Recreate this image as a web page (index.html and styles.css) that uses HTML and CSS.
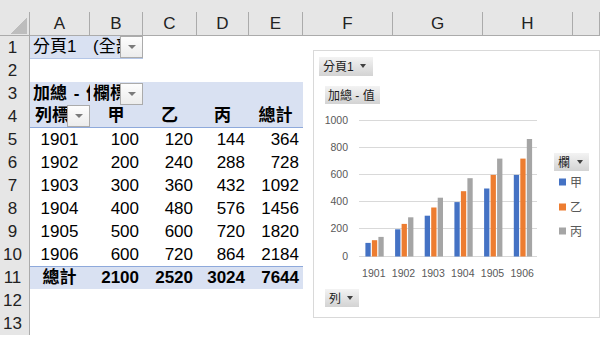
FILE: index.html
```html
<!DOCTYPE html>
<html lang="zh-Hant">
<head>
    <meta charset="UTF-8">
    <title>樞紐分析表</title>
    <link rel="stylesheet" href="styles.css">
</head>
<body>
    <div class="sheet">
        <div class="row colheads">
            <div class="corner"><div class="tri"></div></div>
            <div class="ch">A</div><div class="ch">B</div><div class="ch">C</div><div class="ch">D</div>
            <div class="ch">E</div><div class="ch">F</div><div class="ch">G</div><div class="ch">H</div>
            <div class="ch"></div>
        </div>

        <div class="row">
            <div class="rn">1</div>
            <div class="c pv page">分頁1</div>
            <div class="c pv page has-btn"><span class="lbl">(全部)</span><div class="dd"></div></div>
        </div>
        <div class="row">
            <div class="rn">2</div>
        </div>
        <div class="row">
            <div class="rn">3</div>
            <div class="c pv b wide">加總 - 值</div>
            <div class="c pv b has-btn"><span class="lbl">欄標籤</span><div class="dd"></div></div>
            <div class="c pv"></div><div class="c pv"></div><div class="c pv"></div>
        </div>
        <div class="row">
            <div class="rn">4</div>
            <div class="c pv b head has-btn"><span class="lbl">列標籤</span><div class="dd"></div></div>
            <div class="c pv b head ctr">甲</div>
            <div class="c pv b head ctr">乙</div>
            <div class="c pv b head ctr">丙</div>
            <div class="c pv b head ctr">總計</div>
        </div>
        <div class="row">
            <div class="rn">5</div>
            <div class="c ctr">1901</div><div class="c num">100</div><div class="c num">120</div><div class="c num">144</div><div class="c num">364</div>
        </div>
        <div class="row">
            <div class="rn">6</div>
            <div class="c ctr">1902</div><div class="c num">200</div><div class="c num">240</div><div class="c num">288</div><div class="c num">728</div>
        </div>
        <div class="row">
            <div class="rn">7</div>
            <div class="c ctr">1903</div><div class="c num">300</div><div class="c num">360</div><div class="c num">432</div><div class="c num">1092</div>
        </div>
        <div class="row">
            <div class="rn">8</div>
            <div class="c ctr">1904</div><div class="c num">400</div><div class="c num">480</div><div class="c num">576</div><div class="c num">1456</div>
        </div>
        <div class="row">
            <div class="rn">9</div>
            <div class="c ctr">1905</div><div class="c num">500</div><div class="c num">600</div><div class="c num">720</div><div class="c num">1820</div>
        </div>
        <div class="row">
            <div class="rn">10</div>
            <div class="c ctr">1906</div><div class="c num">600</div><div class="c num">720</div><div class="c num">864</div><div class="c num">2184</div>
        </div>
        <div class="row">
            <div class="rn">11</div>
            <div class="c pv b total ctr">總計</div>
            <div class="c pv b total num">2100</div>
            <div class="c pv b total num">2520</div>
            <div class="c pv b total num">3024</div>
            <div class="c pv b total num">7644</div>
        </div>
        <div class="row">
            <div class="rn">12</div>
        </div>
        <div class="row">
            <div class="rn">13</div>
        </div>

        <div class="chart">
            <svg width="287" height="268" viewBox="0 0 287 268">
                <defs>
                    <linearGradient id="btn" x1="0" y1="0" x2="0" y2="1">
                        <stop offset="0" stop-color="#F3F3F3"/>
                        <stop offset="1" stop-color="#D3D3D3"/>
                    </linearGradient>
                </defs>
                <rect x="0.5" y="0.5" width="286" height="267" fill="#fff" stroke="#D9D9D9"/>

                <!-- 欄位按鈕 -->
                <rect x="6" y="7" width="54" height="19" fill="url(#btn)"/>
                <text class="btn-text" x="10" y="21">分頁1</text>
                <polygon points="47,14 53,14 50,18" fill="#404040"/>

                <rect x="12" y="36" width="55" height="18" fill="url(#btn)"/>
                <text class="btn-text" x="15" y="50">加總 - 值</text>

                <rect x="241" y="103" width="35" height="18" fill="url(#btn)"/>
                <text class="btn-text" x="245" y="117">欄</text>
                <polygon points="264,110 270,110 267,114" fill="#404040"/>

                <rect x="12" y="239" width="34" height="18" fill="url(#btn)"/>
                <text class="btn-text" x="16" y="253">列</text>
                <polygon points="34,246 40,246 37,250" fill="#404040"/>

                <!-- 格線與座標 -->
                <g class="grid">
                    <line x1="46" y1="70.5" x2="224" y2="70.5"/>
                    <line x1="46" y1="97.5" x2="224" y2="97.5"/>
                    <line x1="46" y1="124.5" x2="224" y2="124.5"/>
                    <line x1="46" y1="151.5" x2="224" y2="151.5"/>
                    <line x1="46" y1="178.5" x2="224" y2="178.5"/>
                    <line x1="46" y1="206.5" x2="224" y2="206.5"/>
                </g>
                <g class="axis" text-anchor="end">
                    <text x="35" y="74">1000</text>
                    <text x="35" y="101">800</text>
                    <text x="35" y="128">600</text>
                    <text x="35" y="155">400</text>
                    <text x="35" y="182">200</text>
                    <text x="35" y="210">0</text>
                </g>
                <g id="bars"></g>
                <g id="cats" class="axis" text-anchor="middle"></g>

                <!-- 圖例 -->
                <rect x="246" y="128.5" width="7" height="7" fill="#4472C4"/>
                <text class="legend" x="257" y="137">甲</text>
                <rect x="246" y="153.5" width="7" height="7" fill="#ED7D31"/>
                <text class="legend" x="257" y="162">乙</text>
                <rect x="246" y="177.5" width="7" height="7" fill="#A5A5A5"/>
                <text class="legend" x="257" y="186">丙</text>
            </svg>
        </div>
    </div>

    <script>
        const data = [[100, 120, 144], [200, 240, 288], [300, 360, 432], [400, 480, 576], [500, 600, 720], [600, 720, 864]];
        const colors = ['#4472C4', '#ED7D31', '#A5A5A5'];
        const years = ['1901', '1902', '1903', '1904', '1905', '1906'];
        const ns = 'http://www.w3.org/2000/svg';
        const bars = document.getElementById('bars');
        const cats = document.getElementById('cats');

        data.forEach(function(vals, i) {
            const x0 = 46 + i * 29.67;
            vals.forEach(function(v, j) {
                const h = v * 0.136;
                const r = document.createElementNS(ns, 'rect');
                r.setAttribute('x', (x0 + 6.4 + j * 6.5).toFixed(1));
                r.setAttribute('y', (206.5 - h).toFixed(1));
                r.setAttribute('width', 5.3);
                r.setAttribute('height', h.toFixed(1));
                r.setAttribute('fill', colors[j]);
                bars.appendChild(r);
            });
            const t = document.createElementNS(ns, 'text');
            t.setAttribute('x', (x0 + 14.8).toFixed(1));
            t.setAttribute('y', 227);
            t.textContent = years[i];
            cats.appendChild(t);
        });
    </script>
</body>
</html>
```

FILE: styles.css
```css
body {
    margin: 0;
    font-family: "Liberation Sans", "Noto Sans CJK TC", sans-serif;
    font-size: 17px;
    color: #000;
    background: #fff;
    overflow: hidden;
}
.sheet {
    position: relative;
    width: 600px;
    height: 337px;
    overflow: hidden;
}
.row {
    display: grid;
    grid-template-columns: 30px 60px 53px 54px 52px 54px 90px 90px 90px 27px;
    height: 23px;
    line-height: 23px;
}
.colheads {
    height: 36px;
    padding-top: 12px;
    box-sizing: border-box;
    background: #E6E6E6;
    border-bottom: 1px solid #ABABAB;
    line-height: 23px;
}
.ch {
    border-right: 1px solid #ABABAB;
    text-align: center;
    color: #222;
}
.corner {
    display: flex;
    justify-content: flex-end;
    align-items: flex-end;
    padding: 0 2px 1px 0;
    border-right: 1px solid #ABABAB;
}
.tri {
    width: 17px;
    height: 17px;
    background: linear-gradient(to top left, #BDBDBD 50%, transparent 50%);
}
.rn {
    background: #E6E6E6;
    border-right: 1px solid #ABABAB;
    text-align: center;
    padding-right: 4px;
    color: #222;
}
.c {
    overflow: hidden;
    white-space: nowrap;
    padding: 0 4px 0 3px;
    box-sizing: border-box;
}
.pv { background: #D9E1F2; }
.page { border-bottom: 1px solid #B4C6E7; line-height: 22px; }
.head { border-bottom: 1px solid #8EA9DB; line-height: 22px; }
.total { border-top: 1px solid #8EA9DB; line-height: 22px; }
.b { font-weight: bold; }
.wide { word-spacing: 2px; }
.ctr { text-align: center; }
.num { text-align: right; }
.has-btn {
    display: flex;
    align-items: center;
    padding-right: 0;
}
.has-btn .lbl {
    flex: 1;
    overflow: hidden;
    white-space: nowrap;
}
.head.has-btn { padding-left: 5px; }
.dd {
    flex: none;
    width: 23px;
    height: 22px;
    box-sizing: border-box;
    border: 1px solid #ABABAB;
    background: linear-gradient(#FDFDFD, #ECECEC);
    display: flex;
    justify-content: center;
    align-items: center;
}
.dd::before {
    content: "";
    border-left: 4px solid transparent;
    border-right: 4px solid transparent;
    border-top: 4px solid #7A7A7A;
}
.chart {
    position: absolute;
    left: 313px;
    top: 50px;
}
.chart svg { display: block; }
.chart text { font-family: "Liberation Sans", "Noto Sans CJK TC", sans-serif; }
.btn-text { font-size: 12px; fill: #1A1A1A; }
.grid line { stroke: #D9D9D9; stroke-width: 1; }
.axis text, .axis { font-size: 10.5px; fill: #595959; }
.legend { font-size: 12px; fill: #595959; }
```
